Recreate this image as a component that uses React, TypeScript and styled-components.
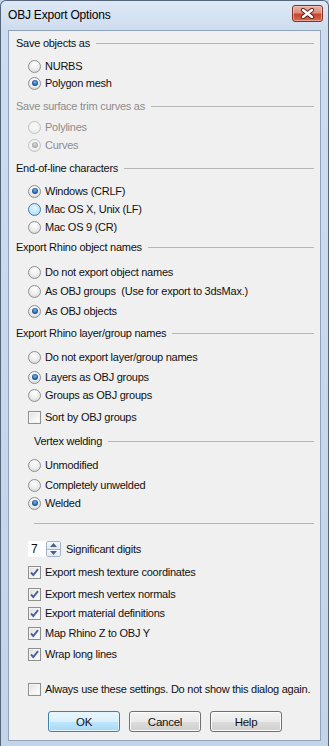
import React from 'react'
import styled, { createGlobalStyle, css } from 'styled-components'

const GlobalStyle = createGlobalStyle`
  html, body {
    margin: 0;
    padding: 0;
    background: #c6d6ea;
  }
  * { box-sizing: border-box; }
`

const App = () => {
  return (
    <>
      <GlobalStyle />
      <Window>
        <TitleBar>
          <Title>OBJ Export Options</Title>
          <CloseButton>
            <svg width="15" height="11" viewBox="0 0 15 11">
              <path d="M3 2 L12 9 M12 2 L3 9" stroke="#5a2018" strokeWidth="4.2" strokeLinecap="round" />
              <path d="M3 2 L12 9 M12 2 L3 9" stroke="#ffffff" strokeWidth="2.4" strokeLinecap="round" />
            </svg>
          </CloseButton>
        </TitleBar>
        <Content>
          <Heading $mt={4}>Save objects as<Rule /></Heading>
          <Option $mt={7}><Radio />NURBS</Option>
          <Option $mt={1}><Radio $checked />Polygon mesh</Option>

          <Heading $mt={7} $disabled>Save surface trim curves as<Rule /></Heading>
          <Option $mt={5} $disabled><Radio $disabled />Polylines</Option>
          <Option $mt={2} $disabled><Radio $disabled $checked />Curves</Option>

          <Heading $mt={7}>End-of-line characters<Rule /></Heading>
          <Option $mt={7}><Radio $checked />Windows (CRLF)</Option>
          <Option $mt={2}><Radio $hover />Mac OS X, Unix (LF)</Option>
          <Option $mt={2}><Radio />Mac OS 9 (CR)</Option>

          <Heading $mt={4}>Export Rhino object names<Rule /></Heading>
          <Option $mt={9}><Radio />Do not export object names</Option>
          <Option $mt={3}><Radio />As OBJ groups&nbsp; (Use for export to 3dsMax.)</Option>
          <Option $mt={4}><Radio $checked />As OBJ objects</Option>

          <Heading $mt={6}>Export Rhino layer/group names<Rule /></Heading>
          <Option $mt={8}><Radio />Do not export layer/group names</Option>
          <Option $mt={4}><Radio $checked />Layers as OBJ groups</Option>
          <Option $mt={2}><Radio />Groups as OBJ groups</Option>
          <Option $mt={6}><Check />Sort by OBJ groups</Option>

          <Heading $mt={8} $indent>Vertex welding<Rule /></Heading>
          <Option $mt={8}><Radio />Unmodified</Option>
          <Option $mt={4}><Radio />Completely unwelded</Option>
          <Option $mt={2}><Radio $checked />Welded</Option>

          <Separator />

          <SpinRow>
            <SpinField>
              <SpinValue>7</SpinValue>
              <Spinner>
                <SpinArrow>
                  <svg width="7" height="4" viewBox="0 0 7 4"><path d="M0 4 L3.5 0 L7 4 Z" fill="#4d6185" /></svg>
                </SpinArrow>
                <SpinArrow>
                  <svg width="7" height="4" viewBox="0 0 7 4"><path d="M0 0 L3.5 4 L7 0 Z" fill="#4d6185" /></svg>
                </SpinArrow>
              </Spinner>
            </SpinField>
            Significant digits
          </SpinRow>

          <Option $mt={7}><Check $checked />Export mesh texture coordinates</Option>
          <Option $mt={6}><Check $checked />Export mesh vertex normals</Option>
          <Option $mt={3}><Check $checked />Export material definitions</Option>
          <Option $mt={4}><Check $checked />Map Rhino Z to OBJ Y</Option>
          <Option $mt={5}><Check $checked />Wrap long lines</Option>

          <Option $mt={19}><Check />Always use these settings. Do not show this dialog again.</Option>

          <ButtonRow>
            <Button $default>OK</Button>
            <Button>Cancel</Button>
            <Button>Help</Button>
          </ButtonRow>
        </Content>
      </Window>
    </>
  )
}

const Check = ({ $checked }: { $checked?: boolean }) => (
  <CheckBox>
    {$checked && (
      <svg width="11" height="11" viewBox="0 0 11 11">
        <path d="M2 5.5 L4.3 8 L9 2.2" stroke="#4a5f9c" strokeWidth="1.9" fill="none" />
      </svg>
    )}
  </CheckBox>
)

export default App

const Window = styled.div`
  width: 329px;
  height: 746px;
  border: 1px solid #56657a;
  border-bottom: none;
  border-radius: 6px 6px 0 0;
  background: linear-gradient(to bottom, #dde8f5 0px, #cddcee 30px, #c3d4e9 100%);
  padding: 0 7px 5px 7px;
  display: flex;
  flex-direction: column;
  font-family: "Liberation Sans", Arial, sans-serif;
`
const TitleBar = styled.div`
  height: 29px;
  display: flex;
  align-items: center;
  justify-content: space-between;
`
const Title = styled.div`
  font-size: 12px;
  letter-spacing: -0.2px;
  color: #000;
  margin-top: -2px;
`
const CloseButton = styled.div`
  width: 31px;
  height: 17px;
  margin-right: -2px;
  margin-top: -4px;
  border: 1px solid #7d3328;
  border-radius: 3px;
  background: linear-gradient(to bottom, #eab1a4 0%, #dc8c7a 45%, #c8442e 55%, #d8694f 100%);
  box-shadow: inset 0 0 0 1px rgba(255, 220, 210, 0.5);
  display: flex;
  align-items: center;
  justify-content: center;
`
const Content = styled.div`
  flex: 1;
  background: #f0f0f0;
  border: 1px solid #8fa3bc;
  padding: 0 6px 0 7px;
  display: flex;
  flex-direction: column;
  font-size: 11px;
  letter-spacing: -0.25px;
  color: #111;
`
const Heading = styled.div<{ $mt: number; $disabled?: boolean; $indent?: boolean }>`
  height: 16px;
  margin-top: ${p => p.$mt}px;
  padding-left: ${p => (p.$indent ? 18 : 0)}px;
  display: flex;
  align-items: center;
  white-space: nowrap;
  color: ${p => (p.$disabled ? '#8d8d8d' : '#111')};
`
const Rule = styled.span`
  flex: 1;
  height: 1px;
  margin-left: 6px;
  background: #b6b6b6;
`
const Option = styled.div<{ $mt: number; $disabled?: boolean }>`
  height: 16px;
  margin-top: ${p => p.$mt}px;
  padding-left: 12px;
  display: flex;
  align-items: center;
  gap: 4px;
  white-space: nowrap;
  color: ${p => (p.$disabled ? '#8d8d8d' : '#111')};
`
const Radio = styled.span<{ $checked?: boolean; $disabled?: boolean; $hover?: boolean }>`
  position: relative;
  width: 13px;
  height: 13px;
  flex: none;
  border-radius: 50%;
  border: 1px solid #8e8f8f;
  background: radial-gradient(circle at 50% 30%, #ffffff 0%, #ececec 55%, #cbcbcb 100%);
  ${p => p.$hover && css`
    border-color: #3c7fb1;
    background: radial-gradient(circle at 50% 35%, #e6f6fe 0%, #bfe6fb 60%, #8fcdf0 100%);
  `}
  ${p => p.$disabled && css`
    border-color: #c2c2c2;
    background: radial-gradient(circle at 50% 30%, #fbfbfb 0%, #f0f0f0 60%, #e2e2e2 100%);
  `}
  ${p => p.$checked && css`
    &::after {
      content: '';
      position: absolute;
      left: 2.5px;
      top: 2.5px;
      width: 6px;
      height: 6px;
      border-radius: 50%;
      background: ${p.$disabled
        ? 'radial-gradient(circle at 50% 40%, #d8d8d8 0%, #a5a5a5 70%, #8a8a8a 100%)'
        : 'radial-gradient(circle at 50% 40%, #7fb8ea 0%, #225ea6 55%, #0e2f63 100%)'};
    }
  `}
`
const CheckBox = styled.span`
  width: 13px;
  height: 13px;
  flex: none;
  border: 1px solid #8e8f8f;
  background: linear-gradient(135deg, #dcdcdc 0%, #f2f2f2 50%, #ffffff 100%);
  box-shadow: inset 0 0 0 1px #f4f4f4;
  display: flex;
  align-items: center;
  justify-content: center;
`
const Separator = styled.div`
  height: 1px;
  margin: 12px 0 0 18px;
  background: #b6b6b6;
`
const SpinRow = styled.div`
  height: 16px;
  margin-top: 17px;
  padding-left: 12px;
  display: flex;
  align-items: center;
  gap: 5px;
  white-space: nowrap;
`
const SpinField = styled.div`
  width: 33px;
  height: 16px;
  background: #fff;
  display: flex;
  justify-content: space-between;
`
const SpinValue = styled.span`
  padding-left: 3px;
  line-height: 16px;
  font-size: 12px;
`
const Spinner = styled.div`
  width: 15px;
  height: 16px;
  display: flex;
  flex-direction: column;
  border: 1px solid #a5b3c8;
  border-radius: 2px;
  overflow: hidden;
`
const SpinArrow = styled.div`
  flex: 1;
  display: flex;
  align-items: center;
  justify-content: center;
  background: linear-gradient(to bottom, #f6f9fc 0%, #dfe8f2 100%);
  & + & {
    border-top: 1px solid #a5b3c8;
  }
`
const ButtonRow = styled.div`
  margin-top: 14px;
  display: flex;
  justify-content: center;
  gap: 9px;
`
const Button = styled.div<{ $default?: boolean }>`
  width: 72px;
  height: 21px;
  border: 1px solid #707070;
  border-radius: 3px;
  background: linear-gradient(to bottom, #f2f2f2 0%, #ebebeb 50%, #dddddd 51%, #cfcfcf 100%);
  box-shadow: inset 0 0 0 1px #fbfbfb;
  display: flex;
  align-items: center;
  justify-content: center;
  font-size: 11.5px;
  ${p => p.$default && css`
    border-color: #3c7fb1;
    background: linear-gradient(to bottom, #eaf6fd 0%, #d9f0fc 50%, #bee6fd 51%, #a7d9f5 100%);
    box-shadow: inset 0 0 0 1px #e4f4fc;
  `}
`
